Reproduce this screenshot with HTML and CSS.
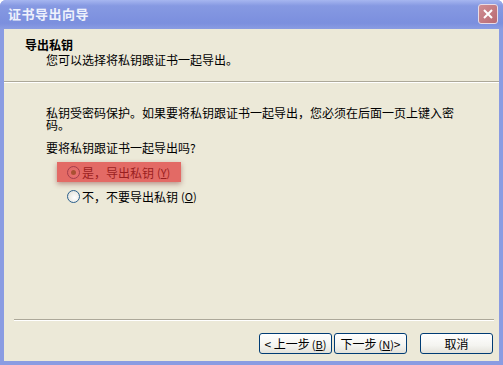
FILE: index.html
```html
<!DOCTYPE html>
<html lang="zh-CN">

<head>
    <meta charset="UTF-8">
    <title>证书导出向导</title>
    <link rel="stylesheet" href="styles.css">
</head>

<body>
    <div class="window">
        <div class="titlebar">
            <span class="title">证书导出向导</span>
            <span class="close">
                <svg width="10" height="10" viewBox="0 0 10 10">
                    <path d="M1 1L9 9M9 1L1 9" stroke="#fff" stroke-width="2" />
                </svg>
            </span>
        </div>
        <div class="client">
            <div class="header">
                <div class="head-title">导出私钥</div>
                <div class="head-sub">您可以选择将私钥跟证书一起导出。</div>
            </div>
            <div class="content">
                <p class="text">私钥受密码保护。如果要将私钥跟证书一起导出，您必须在后面一页上键入密码。</p>
                <p class="question">要将私钥跟证书一起导出吗?</p>
                <div class="options">
                    <label class="option marked"><span class="radio checked"></span>是，导出私钥<span class="key">(<u>Y</u>)</span></label>
                    <label class="option"><span class="radio"></span>不，不要导出私钥<span class="key">(<u>O</u>)</span></label>
                </div>
            </div>
            <div class="footer">
                <div class="buttons">
                    <button class="btn">&lt; 上一步<span class="key">(<u>B</u>)</span></button>
                    <button class="btn">下一步<span class="key">(<u>N</u>)</span> &gt;</button>
                    <button class="btn cancel">取消</button>
                </div>
            </div>
        </div>
    </div>
</body>

</html>
```

FILE: styles.css
```css
* {
    padding: 0;
    margin: 0;
    box-sizing: border-box;
}

body {
    width: 503px;
    height: 365px;
    overflow: hidden;
    font-family: "Noto Sans CJK SC", "DejaVu Sans", sans-serif;
    font-size: 12px;
    color: #000;
}

.window {
    width: 503px;
    height: 365px;
    display: flex;
    flex-direction: column;
    background: #8a9ce2;
    padding: 0 4px 4px 4px;
    border-radius: 6px 6px 0 0;
}

.titlebar {
    height: 29px;
    display: flex;
    align-items: center;
    justify-content: space-between;
    padding: 0 5px 2px 8px;
    margin: 0 -4px;
    border-radius: 6px 6px 0 0;
    background: linear-gradient(#a6b6f0, #8699e2 20%, #7b8fde 80%, #8a9ce2);
}

.title {
    color: #eef1fc;
    font-weight: bold;
    font-size: 13px;
    letter-spacing: 0.5px;
}

.close {
    width: 20px;
    height: 20px;
    border: 1px solid #e9dce6;
    border-radius: 3px;
    background: linear-gradient(135deg, #d08e93, #b86a72);
    display: flex;
    align-items: center;
    justify-content: center;
}

.client {
    flex: 1;
    background: #ece9d8;
    display: flex;
    flex-direction: column;
}

.header {
    height: 53px;
    padding: 8px 0 0 21px;
    border-bottom: 1px solid #aca899;
    box-shadow: 0 1px 0 #fff;
}

.head-title {
    font-weight: bold;
    line-height: 15px;
}

.head-sub {
    padding-left: 21px;
    line-height: 15px;
}

.content {
    flex: 1;
    padding: 25px 0 0 42px;
}

.text {
    line-height: 12px;
    width: 412px;
}

.question {
    margin-top: 10px;
    line-height: 14px;
}

.options {
    margin-top: 6px;
    display: flex;
    flex-direction: column;
    align-items: flex-start;
}

.option {
    display: flex;
    align-items: center;
    height: 20px;
    margin-left: 21px;
    gap: 1px;
}

.option.marked {
    position: relative;
    margin-left: 11px;
    padding: 0 11px 0 10px;
    margin-top: 1px;
    margin-bottom: 4px;
}

.option.marked::after {
    content: "";
    position: absolute;
    left: 0;
    top: 0;
    right: 0;
    bottom: 0;
    background: rgba(222, 45, 45, 0.68);
    box-shadow: 0 2px 5px rgba(120, 40, 40, 0.45);
}

.key {
    font-size: 11px;
    margin-left: 2px;
}

.radio {
    width: 13px;
    height: 13px;
    border-radius: 50%;
    border: 1px solid #2a5f8c;
    background: radial-gradient(circle at 60% 60%, #fff, #dcdcd3);
    margin-right: 1px;
    display: flex;
    align-items: center;
    justify-content: center;
}

.radio.checked::before {
    content: "";
    width: 5px;
    height: 5px;
    border-radius: 50%;
    background: #3c9a3c;
}

.footer {
    height: 42px;
    margin: 0 5px 0 10px;
    border-top: 1px solid #aca899;
    box-shadow: inset 0 1px 0 #fff;
}

.buttons {
    display: flex;
    justify-content: flex-end;
    padding-top: 13px;
    padding-right: 1px;
}

.btn {
    height: 21px;
    width: 73px;
    font-family: inherit;
    font-size: 12px;
    color: #000;
    border: 1px solid #003c74;
    border-radius: 3px;
    background: linear-gradient(#fff, #f4f4f0 60%, #e3e2da);
    display: flex;
    align-items: center;
    justify-content: center;
    margin-left: 2px;
}

.btn.cancel {
    margin-left: 13px;
}
```
